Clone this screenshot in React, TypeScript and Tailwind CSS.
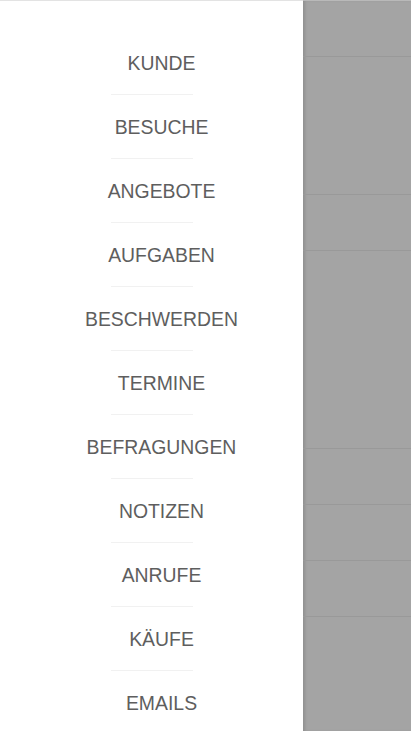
import React from "react";

const items = [
  "KUNDE",
  "BESUCHE",
  "ANGEBOTE",
  "AUFGABEN",
  "BESCHWERDEN",
  "TERMINE",
  "BEFRAGUNGEN",
  "NOTIZEN",
  "ANRUFE",
  "KÄUFE",
  "EMAILS",
];

const rows = [56, 138, 56, 199, 56, 56, 56, 114];

export default function App() {
  return (
    <div
      className="flex h-[731px] w-[411px] overflow-hidden bg-white"
      style={{ fontFamily: '"Liberation Sans", Arial, sans-serif' }}
    >
      <div className="flex w-[303px] flex-col border-t border-[#e3e3e3] pt-[30px]">
        {items.map((label, i) => (
          <div key={label} className="flex flex-col items-center">
            <div className="flex h-[63px] w-full items-center justify-center pl-[20px] pt-[3px] text-[19.4px] text-[#5e5e5e]">
              {label}
            </div>
            {i < items.length - 1 && (
              <div className="h-px w-[82px] bg-[#f1f1f1]" />
            )}
          </div>
        ))}
      </div>
      <div className="flex flex-1 flex-col border-t border-[#b9b9b9] bg-[#a4a4a4] shadow-[inset_3px_0_3px_-1px_rgba(0,0,0,0.12)]">
        {rows.map((h, i) => (
          <div
            key={i}
            className={
              i < rows.length - 1
                ? "border-b border-[#999999]"
                : ""
            }
            style={{ height: h }}
          />
        ))}
      </div>
    </div>
  );
}
